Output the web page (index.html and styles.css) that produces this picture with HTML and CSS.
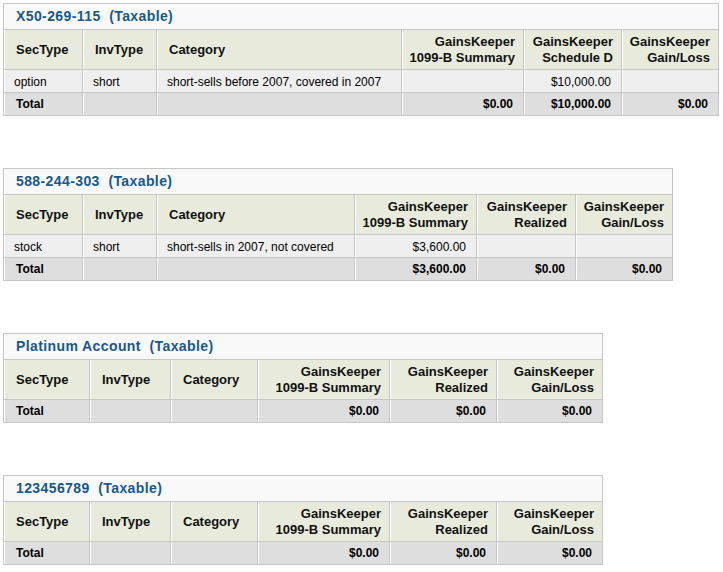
FILE: index.html
```html
<!DOCTYPE html>
<html>
<head>
<meta charset="utf-8">
<title>GainsKeeper Accounts</title>
<link rel="stylesheet" href="styles.css">
</head>
<body>

<table class="acct acct-wide">
  <colgroup>
    <col class="w-sec"><col class="w-inv"><col class="w-cat1"><col class="w-sum"><col class="w-mid"><col class="w-gl">
  </colgroup>
  <tr class="title"><th colspan="6">X50-269-115&nbsp; (Taxable)</th></tr>
  <tr class="head">
    <th>SecType</th><th>InvType</th><th>Category</th>
    <th class="num">GainsKeeper<br>1099-B Summary</th>
    <th class="num">GainsKeeper<br>Schedule D</th>
    <th class="num">GainsKeeper<br>Gain/Loss</th>
  </tr>
  <tr class="data">
    <td>option</td><td>short</td><td>short-sells before 2007, covered in 2007</td>
    <td class="num"></td><td class="num">$10,000.00</td><td class="num"></td>
  </tr>
  <tr class="total">
    <td>Total</td><td></td><td></td>
    <td class="num">$0.00</td><td class="num">$10,000.00</td><td class="num">$0.00</td>
  </tr>
</table>

<table class="acct acct-mid">
  <colgroup>
    <col class="w-sec"><col class="w-inv"><col class="w-cat2"><col class="w-sum"><col class="w-mid2"><col class="w-gl">
  </colgroup>
  <tr class="title"><th colspan="6">588-244-303&nbsp; (Taxable)</th></tr>
  <tr class="head">
    <th>SecType</th><th>InvType</th><th>Category</th>
    <th class="num">GainsKeeper<br>1099-B Summary</th>
    <th class="num">GainsKeeper<br>Realized</th>
    <th class="num">GainsKeeper<br>Gain/Loss</th>
  </tr>
  <tr class="data">
    <td>stock</td><td>short</td><td>short-sells in 2007, not covered</td>
    <td class="num">$3,600.00</td><td class="num"></td><td class="num"></td>
  </tr>
  <tr class="total">
    <td>Total</td><td></td><td></td>
    <td class="num">$3,600.00</td><td class="num">$0.00</td><td class="num">$0.00</td>
  </tr>
</table>

<table class="acct acct-narrow">
  <colgroup>
    <col class="n-sec"><col class="n-inv"><col class="n-cat"><col class="n-sum"><col class="n-real"><col class="n-gl">
  </colgroup>
  <tr class="title"><th colspan="6">Platinum Account&nbsp; (Taxable)</th></tr>
  <tr class="head">
    <th>SecType</th><th>InvType</th><th>Category</th>
    <th class="num">GainsKeeper<br>1099-B Summary</th>
    <th class="num">GainsKeeper<br>Realized</th>
    <th class="num">GainsKeeper<br>Gain/Loss</th>
  </tr>
  <tr class="total">
    <td>Total</td><td></td><td></td>
    <td class="num">$0.00</td><td class="num">$0.00</td><td class="num">$0.00</td>
  </tr>
</table>

<table class="acct acct-narrow acct-last">
  <colgroup>
    <col class="n-sec"><col class="n-inv"><col class="n-cat"><col class="n-sum"><col class="n-real"><col class="n-gl">
  </colgroup>
  <tr class="title"><th colspan="6">123456789&nbsp; (Taxable)</th></tr>
  <tr class="head">
    <th>SecType</th><th>InvType</th><th>Category</th>
    <th class="num">GainsKeeper<br>1099-B Summary</th>
    <th class="num">GainsKeeper<br>Realized</th>
    <th class="num">GainsKeeper<br>Gain/Loss</th>
  </tr>
  <tr class="total">
    <td>Total</td><td></td><td></td>
    <td class="num">$0.00</td><td class="num">$0.00</td><td class="num">$0.00</td>
  </tr>
</table>

</body>
</html>
```

FILE: styles.css
```css
html, body {
  background: #ffffff;
}

body {
  margin: 3px;
  font-family: "Liberation Sans", Arial, sans-serif;
  color: #000;
}

.acct {
  table-layout: fixed;
  border-collapse: separate;
  border-spacing: 0;
  border-top: 1px solid #c6c6c6;
  border-left: 1px solid #c6c6c6;
  margin: 0 0 52px 0;
}

.acct-last { margin-bottom: 0; }

.acct-wide { width: 716px; }
.acct-mid { width: 670px; }
.acct-narrow { width: 600px; }

/* column widths, wide / mid tables */
.w-sec { width: 79px; }
.w-inv { width: 74px; }
.w-cat1 { width: 245px; }
.w-cat2 { width: 198px; }
.w-sum { width: 122px; }
.w-mid { width: 98px; }
.w-mid2 { width: 99px; }
.w-gl { width: 97px; }

/* column widths, narrow tables */
.n-sec { width: 86px; }
.n-inv { width: 81px; }
.n-cat { width: 87px; }
.n-sum { width: 132px; }
.n-real { width: 107px; }
.n-gl { width: 106px; }

.acct th,
.acct td {
  border-right: 1px solid #c6c6c6;
  border-bottom: 1px solid #c6c6c6;
  overflow: hidden;
  white-space: nowrap;
}

.title th {
  background: #f9f9f9;
  color: #17598c;
  font-size: 14px;
  font-weight: bold;
  letter-spacing: 0.4px;
  line-height: 17px;
  height: 17px;
  padding: 4px 12px;
  text-align: left;
}

.head th {
  background: #e8ebdb;
  font-size: 13px;
  font-weight: bold;
  line-height: 16px;
  height: 32px;
  padding: 4px 12px 3px 12px;
  text-align: left;
  vertical-align: middle;
  color: #111;
  box-shadow: inset 1px 0 0 #ffffff;
}

.head th.num {
  text-align: right;
  padding-right: 8px;
  padding-left: 4px;
}

.data td {
  background: #efefef;
  font-size: 12px;
  line-height: 14px;
  height: 14px;
  padding: 5px 10px 3px 10px;
  box-shadow: inset 1px 0 0 #ffffff;
}

.total td {
  background: #dedede;
  font-size: 12px;
  font-weight: bold;
  line-height: 14px;
  height: 14px;
  padding: 4px 12px;
  box-shadow: inset 1px 0 0 #ffffff;
}

.data td.num,
.total td.num {
  text-align: right;
  padding-right: 10px;
  padding-left: 4px;
}
```
